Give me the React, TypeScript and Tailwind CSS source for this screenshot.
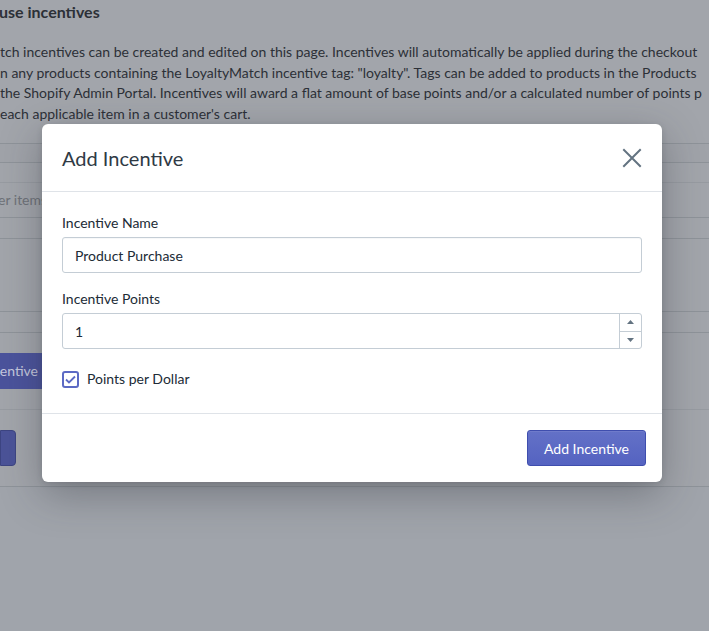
import React from "react"

const lines = [
  "tch incentives can be created and edited on this page. Incentives will automatically be applied during the checkout",
  "n any products containing the LoyaltyMatch incentive tag: \"loyalty\". Tags can be added to products in the Products",
  "the Shopify Admin Portal. Incentives will award a flat amount of base points and/or a calculated number of points p",
  "each applicable item in a customer's cart.",
]

export default function App() {
  return (
    <div className="relative h-[631px] w-[709px] overflow-hidden bg-[#a2a5ab] font-['Lato',sans-serif] text-[#2c3037]">
      {/* page behind the overlay */}
      <div className="pt-[2px]">
        <h2 className="-ml-[1px] text-[16px] leading-[20px] font-bold">use incentives</h2>
        <div className="mt-[20px] whitespace-nowrap text-[14px] leading-[20.7px]">
          {lines.map((l) => (
            <p key={l}>{l}</p>
          ))}
        </div>

        <div className="mt-[18px] border-t border-[#8e9399]">
          <div className="h-[19px] border-b border-[#8e9399] bg-[#a0a3a9]" />
          <div className="h-[20px] border-b border-[#979ba1]" />
          <div className="flex h-[35px] items-center border-b border-[#8e9399] text-[14px] text-[#6e7278]">
            <span className="-ml-[2px]">er items</span>
          </div>
          <div className="h-[21px] border-b border-[#8e9399]" />
          <div className="h-[73px] border-b border-[#8e9399]" />
          <div className="h-[21px] border-b border-[#8e9399]" />
          <div className="flex h-[77px] items-center border-b border-[#979ba1]">
            <div className="flex h-[36px] w-[42px] items-center justify-end overflow-hidden bg-[#4b539c] pr-[4px] text-[14px] text-[#c5c8de]">
              centive
            </div>
          </div>
          <div className="flex h-[77px] items-center border-b border-[#8e9399]">
            <div className="h-[36px] w-[16px] rounded-r-[4px] border border-[#3d4582] bg-[#4b5398]" />
          </div>
        </div>
        <div className="h-[150px] bg-[#a0a4ab]" />
      </div>

      {/* modal */}
      <div className="absolute top-[124px] left-[42px] w-[620px] rounded-[6px] bg-white shadow-[0_12px_40px_rgba(40,44,52,0.35),0_2px_6px_rgba(40,44,52,0.15)]">
        <div className="flex h-[68px] items-center justify-between border-b border-[#dfe3e8] pr-[20px] pl-[20px]">
          <h3 className="text-[20px] leading-[24px] text-[#2f3a45]">Add Incentive</h3>
          <svg width="20" height="20" viewBox="0 0 20 20" className="text-[#637381]">
            <path d="M2 2 L18 18 M18 2 L2 18" stroke="currentColor" strokeWidth="2" strokeLinecap="square" />
          </svg>
        </div>

        <div className="px-[20px] pt-[21px] pb-[24px] text-[14px] text-[#212b36]">
          <label className="block leading-[20px]">Incentive Name</label>
          <div className="mt-[4px] flex h-[36px] items-center rounded-[3px] border border-[#c4cdd5] px-[12px] shadow-[inset_0_1px_0_rgba(99,115,129,0.05)]">
            Product Purchase
          </div>

          <label className="mt-[16px] block leading-[20px]">Incentive Points</label>
          <div className="mt-[4px] flex h-[36px] items-stretch rounded-[3px] border border-[#c4cdd5]">
            <div className="flex flex-1 items-center px-[12px]">1</div>
            <div className="flex w-[22px] flex-col border-l border-[#c4cdd5]">
              <div className="flex flex-1 items-center justify-center border-b border-[#c4cdd5]">
                <svg width="7" height="4" viewBox="0 0 7 4">
                  <path d="M0 4 L3.5 0 L7 4 Z" fill="#637381" />
                </svg>
              </div>
              <div className="flex flex-1 items-center justify-center">
                <svg width="7" height="4" viewBox="0 0 7 4">
                  <path d="M0 0 L3.5 4 L7 0 Z" fill="#637381" />
                </svg>
              </div>
            </div>
          </div>

          <div className="mt-[20px] flex items-center gap-[8px]">
            <div className="flex h-[17px] w-[17px] items-center justify-center rounded-[3px] border-2 border-[#5c6ac4] bg-white">
              <svg width="11" height="9" viewBox="0 0 11 9">
                <path d="M1 4.5 L4 7.5 L10 1.5" fill="none" stroke="#5c6ac4" strokeWidth="1.8" />
              </svg>
            </div>
            <span className="leading-[20px]">Points per Dollar</span>
          </div>
        </div>

        <div className="flex justify-end border-t border-[#dfe3e8] px-[16px] pt-[16px] pb-[16px]">
          <button className="h-[36px] w-[119px] rounded-[3px] border border-[#3f4eae] bg-[linear-gradient(180deg,#6371c7,#5563c1)] text-[14px] text-white shadow-[inset_0_1px_0_0_#6f7bcb]">
            Add Incentive
          </button>
        </div>
      </div>
    </div>
  )
}
